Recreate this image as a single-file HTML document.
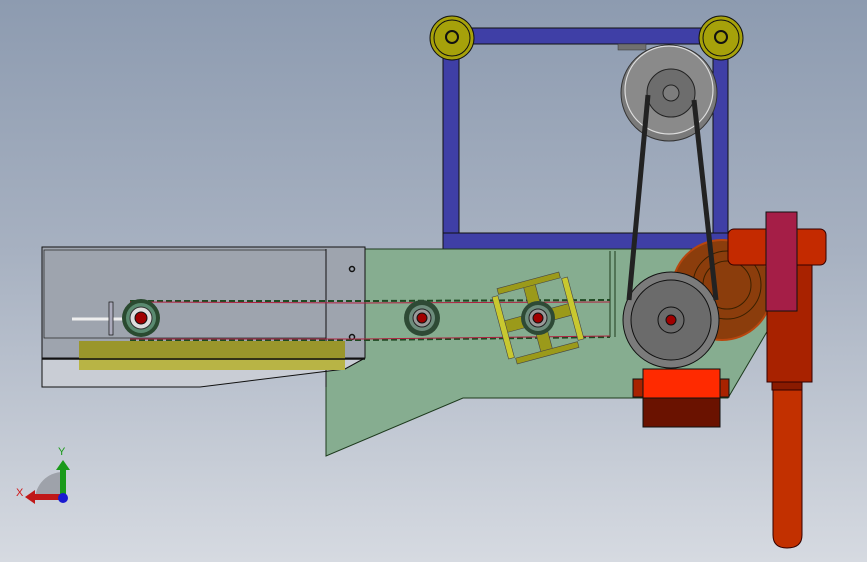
<!DOCTYPE html>
<html><head><style>
html,body{margin:0;padding:0;width:867px;height:562px;overflow:hidden}
body{background:linear-gradient(180deg,#8d9bb0 0%,#a7b1c1 45%,#d6dae1 100%);font-family:"Liberation Sans",sans-serif}
svg{position:absolute;left:0;top:0}
</style></head><body>
<svg width="867" height="562" viewBox="0 0 867 562">
<!-- blue frame -->
<g fill="#3f3fa6" stroke="#111" stroke-width="1">
<rect x="451" y="28" width="270" height="16"/>
<rect x="443" y="38" width="16" height="211"/>
<rect x="713" y="38" width="15" height="211"/>
<rect x="443" y="233" width="285" height="16"/>
</g>
<!-- top pulley -->
<rect x="618" y="44" width="28" height="6" fill="#707070" stroke="#333" stroke-width="0.5"/>
<circle cx="669" cy="93" r="48" fill="#7a7a7a" stroke="#333"/>
<circle cx="669" cy="90" r="44" fill="#8a8a8a" stroke="#ddd" stroke-width="1.2"/>
<circle cx="671" cy="93" r="24" fill="#6d6d6d" stroke="#222"/>
<circle cx="671" cy="93" r="8" fill="#7d7d7d" stroke="#222"/>
<!-- yellow pulleys -->
<g stroke="#111">
<circle cx="452" cy="38" r="22" fill="#a6a10a"/><circle cx="452" cy="38" r="18" fill="none"/><circle cx="452" cy="37" r="6" fill="none" stroke-width="2"/>
<circle cx="721" cy="38" r="22" fill="#a6a10a"/><circle cx="721" cy="38" r="18" fill="none"/><circle cx="721" cy="37" r="6" fill="none" stroke-width="2"/>
</g>
<!-- green plate -->
<polygon points="326,249 768,249 768,330 728,398 463,398 326,456" fill="#86ad90" stroke="#1d3a1d"/>
<line x1="610" y1="251" x2="610" y2="337" stroke="#1d3a1d"/>
<line x1="615" y1="251" x2="615" y2="337" stroke="#1d3a1d"/>
<!-- left gray box (opaque) -->
<polygon points="42,358 365,358 345,369 200,387 42,387" fill="#c9cdd5" stroke="#111"/>
<rect x="42" y="247" width="323" height="111" fill="#9ea4ae" stroke="#111"/>
<rect x="44" y="250" width="282" height="88" fill="none" stroke="#222" stroke-width="0.7"/>
<line x1="326" y1="249" x2="326" y2="387" stroke="#111"/>
<rect x="79" y="341" width="266" height="19" fill="#9a962b"/>
<rect x="79" y="360" width="266" height="10" fill="#b8b445"/>
<line x1="42" y1="359" x2="365" y2="359" stroke="#111" stroke-width="1.5"/>
<circle cx="352" cy="269" r="2.5" fill="none" stroke="#111" stroke-width="1.5"/>
<circle cx="352" cy="337" r="2.5" fill="none" stroke="#111" stroke-width="1.5"/>
<!-- orange motor -->
<circle cx="722" cy="290" r="50" fill="#8b3d0c" stroke="#b8460e" stroke-width="2"/>
<circle cx="727" cy="285" r="34" fill="none" stroke="#3a2000"/>
<circle cx="727" cy="285" r="24" fill="none" stroke="#3a2000"/>
<!-- chains -->
<g stroke-width="2" fill="none">
<path d="M130,301 L365,301 L610,300" stroke="#1e4a22" stroke-dasharray="6,3"/>
<path d="M130,302 L365,303 L610,302" stroke="#b02040" stroke-width="1"/>
<path d="M130,340 L365,340 L610,337" stroke="#1e4a22" stroke-dasharray="6,3"/>
<path d="M130,339 L365,339 L610,336" stroke="#b02040" stroke-width="1"/>
</g>
<!-- left rod -->
<line x1="72" y1="319" x2="124" y2="319" stroke="#eee" stroke-width="3"/>
<rect x="109" y="302" width="4" height="33" fill="#aab" stroke="#111" stroke-width="0.7"/>
<!-- sprockets -->
<g>
<circle cx="141" cy="318" r="19" fill="#2a4a30"/><circle cx="141" cy="318" r="15" fill="#5a8a70"/><circle cx="141" cy="318" r="11" fill="#ddd" stroke="#333"/><circle cx="141" cy="318" r="6" fill="#a00000" stroke="#111"/>
<circle cx="422" cy="318" r="18" fill="#2e4a35"/><circle cx="422" cy="318" r="13" fill="#6d8c7c"/><circle cx="422" cy="318" r="9" fill="#999" stroke="#222"/><circle cx="422" cy="318" r="5" fill="#a00000" stroke="#111"/>
</g>
<!-- yellow paddle -->
<g transform="rotate(-15 538 318)" fill="#9b9a1a" stroke="#444" stroke-width="0.6">
<rect x="532" y="284" width="12" height="68"/>
<rect x="504" y="312" width="68" height="12"/>
<rect x="506" y="279" width="64" height="6"/>
<rect x="506" y="351" width="64" height="6"/>
<rect x="499" y="286" width="6" height="64" fill="#c8c830"/>
<rect x="571" y="286" width="6" height="64" fill="#c8c830"/>
</g>
<circle cx="538" cy="318" r="17" fill="#2e4a35"/><circle cx="538" cy="318" r="13" fill="#6d8c7c"/><circle cx="538" cy="318" r="9" fill="#999" stroke="#222"/><circle cx="538" cy="318" r="5" fill="#a00000" stroke="#111"/>
<!-- red frame -->
<rect x="728" y="229" width="98" height="36" rx="6" fill="#c42a00" stroke="#300"/>
<rect x="767" y="265" width="45" height="117" fill="#a82200" stroke="#300"/>
<rect x="772" y="382" width="30" height="8" fill="#8a1a00" stroke="#300"/>
<path d="M773,390 L802,390 L802,535 Q802,548 787,548 Q773,548 773,535 Z" fill="#c23000" stroke="#300"/>
<rect x="766" y="212" width="31" height="99" fill="#a51e47" stroke="#111"/>
<!-- motor block -->
<rect x="633" y="379" width="96" height="18" fill="#a82200" stroke="#111"/>
<rect x="643" y="369" width="77" height="29" fill="#ff2a00" stroke="#111"/>
<rect x="643" y="398" width="77" height="29" fill="#6a1200" stroke="#111"/>
<!-- bottom pulley -->
<circle cx="671" cy="320" r="48" fill="#7b7b7b" stroke="#111"/>
<circle cx="671" cy="320" r="40" fill="#6b6b6b" stroke="#111"/>
<circle cx="671" cy="320" r="13" fill="#6b6b6b" stroke="#111"/>
<circle cx="671" cy="320" r="5" fill="#a00000" stroke="#111"/>
<!-- belts -->
<line x1="648" y1="95" x2="629" y2="300" stroke="#222" stroke-width="5"/>
<line x1="694" y1="100" x2="716" y2="300" stroke="#222" stroke-width="5"/>
<!-- triad -->
<path d="M35,500 A28,28 0 0 1 63,472 L63,500 Z" fill="#9ea2aa"/>
<rect x="60" y="468" width="6" height="32" fill="#1a9a1a"/>
<polygon points="56,470 63,460 70,470" fill="#1a9a1a"/>
<rect x="33" y="494" width="30" height="6" fill="#c01818"/>
<polygon points="35,490 25,497 35,504" fill="#c01818"/>
<circle cx="63" cy="498" r="5" fill="#1a1ad0"/>
<text x="58" y="455" font-size="11" fill="#1a9a1a" font-family="Liberation Sans">Y</text>
<text x="16" y="496" font-size="11" fill="#d01818" font-family="Liberation Sans">X</text>
</svg>
</body></html>
